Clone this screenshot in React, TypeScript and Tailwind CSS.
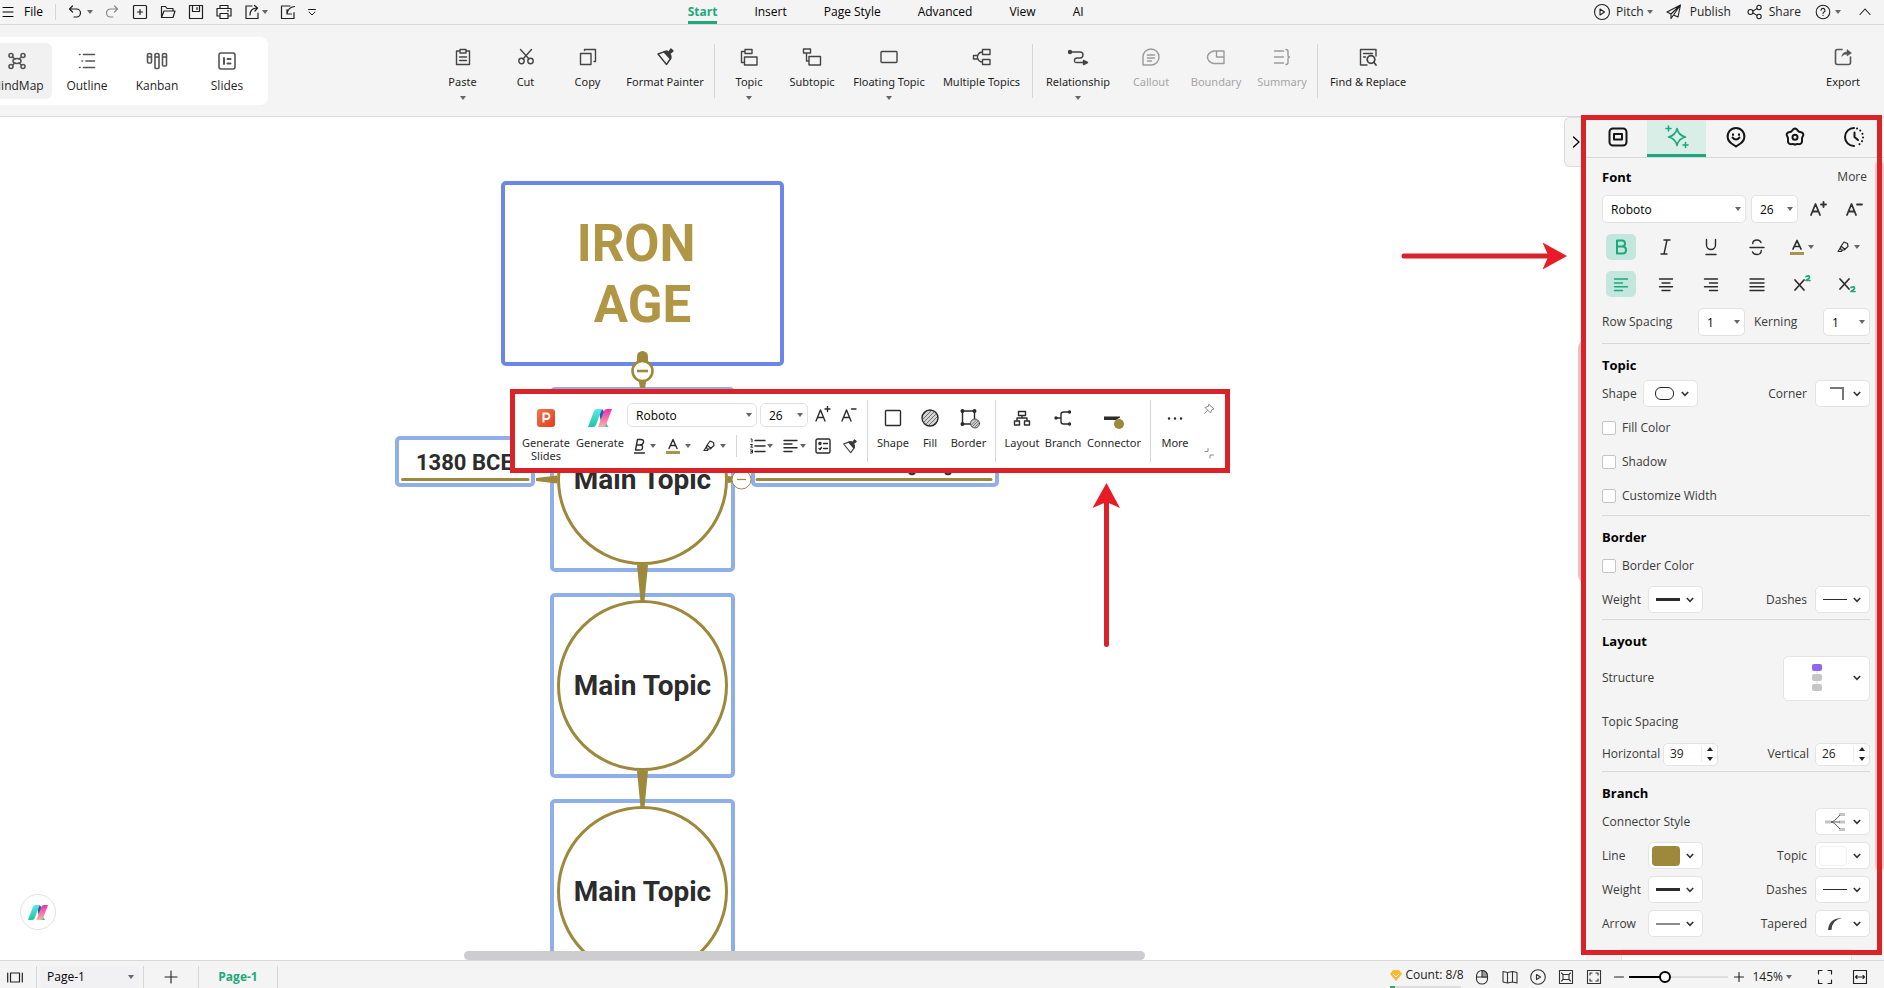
import React from "react";
import clsx from "clsx";

interface IconProps {
  size?: number;
  w?: number;
  className?: string;
  children: React.ReactNode;
}

// every icon is drawn on a grid that is as large as the icon itself
const Icon = ({ size = 18, w = 1.4, className, children }: IconProps) => (
  <svg
    width={size}
    height={size}
    viewBox={`0 0 ${size} ${size}`}
    fill="none"
    stroke="currentColor"
    strokeWidth={w}
    strokeLinecap="round"
    strokeLinejoin="round"
    className={clsx("shrink-0", className)}
    aria-hidden="true"
  >
    {children}
  </svg>
);

const Caret = ({ className }: { className?: string }) => (
  <svg width="6" height="4" viewBox="0 0 6 4" className={clsx("shrink-0 fill-[#666]", className)} aria-hidden="true">
    <path d="M0 0h6L3 4z" />
  </svg>
);

const Chevron = () => (
  <svg width="8" height="6" viewBox="0 0 8 6" fill="none" stroke="#333" strokeWidth="1.6" aria-hidden="true">
    <path d="M.8 1 4 4.4 7.2 1" />
  </svg>
);

const Logo = ({ size = 24 }: { size?: number }) => (
  <svg width={size} height={(size * 18) / 24} viewBox="0 0 24 18" aria-hidden="true">
    <defs>
      <linearGradient id="teal" x1="0" y1="0" x2="0" y2="1">
        <stop offset="0" stopColor="#5fe6e6" />
        <stop offset="1" stopColor="#1cc7a6" />
      </linearGradient>
      <linearGradient id="pink" x1="0" y1="0" x2="0" y2="1">
        <stop offset="0" stopColor="#ee2fb0" />
        <stop offset="1" stopColor="#fbb3a0" />
      </linearGradient>
    </defs>
    <path d="M11 3 14 0l3 4-4 9z" fill="#1c5fb0" />
    <path d="M17 12l3.5 6H15z" fill="#2fd0b0" />
    <path d="M6 2q1-2 3-2h5L8 16q-.8 2-3 2H0z" fill="url(#teal)" />
    <path d="M16 2q1-2 3-2h5l-6 16q-.8 2-3 2h-5z" fill="url(#pink)" />
  </svg>
);

const Brush = ({ small }: { small?: boolean }) => (
  <Icon className={clsx("text-[#3a3a3a]", small && "size-[15px]")}>
    <path d="M8 3.8 15 10l-4.5 6.5L2 6z" />
    <path d="M8 3.8 11 3l1.5 1.5L15 1l2 2-3.3 2.8L15 8l-.8 2.8z" fill="currentColor" />
  </Icon>
);

const Highlighter = () => (
  <Icon size={16} w={1.2}>
    <path d="M5.500 8 9 3l3.500 1.500.5 3L9 11H6zM6.500 7.500l3.500 3M5.500 8.500 3 12.500h3.500l1-1.500" />
  </Icon>
);

interface SelectProps {
  label: string;
  value: string;
  className?: string;
}
const Select = ({ label, value, className }: SelectProps) => (
  <span className={clsx("relative inline-flex items-center", className)}>
    <select
      aria-label={label}
      defaultValue={value}
      className="size-full appearance-none rounded-[5px] border border-[#e2e2e2] bg-white pt-px pl-2 text-[12px] leading-4 text-black"
    >
      <option>{value}</option>
    </select>
    <Caret className="pointer-events-none absolute right-[5px]" />
  </span>
);

interface PickerProps {
  label: string;
  big?: boolean;
  children: React.ReactNode;
}
const Picker = ({ label, big, children }: PickerProps) => (
  <button
    aria-label={label}
    className={clsx(
      "flex items-center justify-between rounded-[5px] border border-[#e4e4e4] bg-white pr-2",
      big ? "h-[45px] w-[87px] pl-1" : "h-[27px] w-[55px]"
    )}
  >
    <span className="flex flex-1 items-center justify-center">{children}</span>
    <Chevron />
  </button>
);

const Stepper = ({ id, value }: { id: string; value: number }) => (
  <span className="flex h-[23px] w-[55px] items-center rounded-[5px] border border-[#e4e4e4] bg-white">
    <input id={id} defaultValue={value} inputMode="numeric" className="h-4 w-[38px] border-r border-[#eee] pl-[6px] text-[12px] text-[#222]" />
    <span className="flex flex-1 flex-col items-center gap-[6px]">
      <button aria-label="Increase">
        <Caret className="block rotate-180 !fill-[#222]" />
      </button>
      <button aria-label="Decrease">
        <Caret className="block !fill-[#222]" />
      </button>
    </span>
  </span>
);

const Check = ({ label }: { label: string }) => (
  <label className="flex h-[34px] items-center gap-[6px] pt-[2px]">
    <input type="checkbox" className="size-[14px] appearance-none rounded-[2px] border border-[#c4c4c4] bg-white" />
    {label}
  </label>
);

const Heading = ({ children }: { children: React.ReactNode }) => (
  <h2 className="flex h-8 items-center pt-[10px] text-[13px] font-bold text-black">{children}</h2>
);

const Divider = ({ className }: { className?: string }) => (
  <span className={clsx("w-px shrink-0 bg-[#d6d6d6]", className)} />
);

const menuTabs = ["Start", "Insert", "Page Style", "Advanced", "View", "AI"];

const TopBar = () => (
  <header className="flex h-[25px] shrink-0 items-center border-b border-[#d9d9d9] text-[#1f1f1f]">
    <div className="flex w-[36.5%] shrink-0 items-center">
      <button className="flex items-center gap-[10px] pl-[2px] text-black">
        <Icon size={12} w={1.1}>
          <path d="M1 1.5h10M1 6h10M1 10.5h10" />
        </Icon>
        File
      </button>
      <Divider className="ml-3 h-4" />
      <button aria-label="Undo" className="ml-3 flex items-center gap-[5px]">
        <Icon size={14} w={1.2}>
          <path d="M4.500 1 1.500 4l3 3M1.500 4H8.500a4 4 0 0 1 0 8H6" />
        </Icon>
        <Caret />
      </button>
      <button aria-label="Redo" className="ml-3 text-[#888]">
        <Icon size={14} w={1.2}>
          <path d="M9.500 1l3 3-3 3M12.500 4H5.500a4 4 0 0 0 0 8H8" />
        </Icon>
      </button>
      <button aria-label="New" className="ml-[13px]">
        <Icon size={16} w={1.2}>
          <rect x="1.5" y="1.5" width="13" height="13" rx="1" />
          <path d="M8 5.500v5M5.500 8h5" />
        </Icon>
      </button>
      <button aria-label="Open" className="ml-3">
        <Icon size={16} w={1.2}>
          <path d="M1.500 13.500V2.500h4l1.500 2h6V7M1.500 13.500 4 7h11l-2 6.500z" />
        </Icon>
      </button>
      <button aria-label="Save" className="ml-3">
        <Icon size={16} w={1.2}>
          <path d="M1.500 1.500h13v13h-13zM4.500 1.500v6h7v-6M9 3.500v2" />
        </Icon>
      </button>
      <button aria-label="Print" className="ml-3">
        <Icon size={16} w={1.2}>
          <path d="M4 4.500v-3h8v3M4 12H1V4.500h14V12h-3M4 9.500h8v5H4zM11.500 6.800h1" />
        </Icon>
      </button>
      <button aria-label="Share file" className="ml-3 flex items-center gap-[2px]">
        <Icon size={16} w={1.2}>
          <path d="M8 2H2v12.500h12V9M6 11c0-4 2-7 7-7M10.500 1.500 13.500 4 11 7" />
        </Icon>
        <Caret />
      </button>
      <button aria-label="Import" className="ml-3">
        <Icon size={16} w={1.2}>
          <path d="M10 2H1.500v12.500H14V8.500M14.500 2.500c-4 .5-7 3-7.500 7.500M7 5.500V10h4.500" />
        </Icon>
      </button>
      <button aria-label="Customize" className="ml-3">
        <Icon size={8} w={1}>
          <path d="M.5 1.500h7M1 4l3 3 3-3" />
        </Icon>
      </button>
    </div>
    <nav className="flex h-full gap-[37px] text-black">
      {menuTabs.map((tab, i) => (
        <button
          key={tab}
          className={clsx(
            "flex h-full items-center border-b-[3px] pt-[2px]",
            i === 0 ? "border-[#1fa97c] font-bold text-[#1fa97c]" : "border-transparent"
          )}
        >
          {tab}
        </button>
      ))}
    </nav>
    <div className="flex flex-1 items-center justify-end pr-[12px]">
      <button className="flex items-center gap-[5px]">
        <Icon size={18} w={1.1}>
          <circle cx="9" cy="9" r="7.5" />
          <path d="M7 6v6l4.500-3z" />
        </Icon>
        <span className="flex items-center gap-[3px]">
          Pitch <Caret />
        </span>
      </button>
      <button className="ml-[13px] flex items-center gap-2">
        <Icon size={16} w={1.1}>
          <path d="M14.500 1 1 8l4 2 9.500-9L12 13l-4.500-2M5 10v4.500l2.500-3.500 7-10" />
        </Icon>
        Publish
      </button>
      <button className="ml-4 flex items-center gap-[6px]">
        <Icon size={16} w={1.1}>
          <circle cx="3.5" cy="8" r="2.5" />
          <circle cx="12" cy="3.5" r="2.2" />
          <circle cx="12" cy="12.5" r="2.2" />
          <path d="M6 7l4-2.400M6 9l4 2.400" />
        </Icon>
        Share
      </button>
      <button aria-label="Help" className="ml-[14px] flex items-center gap-[4px]">
        <Icon size={16} w={1.1}>
          <circle cx="8" cy="8" r="6.8" />
          <path d="M6 6.300a2 2 0 1 1 2.800 1.900Q8 8.600 8 9.500M8 11.300v.2" />
        </Icon>
        <Caret />
      </button>
      <button aria-label="Collapse ribbon" className="ml-[17px]">
        <Icon size={14} w={1.1}>
          <path d="M2 9.500 7 4l5 5.500" />
        </Icon>
      </button>
    </div>
  </header>
);

const views = [
  {
    name: "MindMap",
    icon: (
      <>
        <ellipse cx="9" cy="9" rx="4" ry="2.5" />
        <circle cx="3" cy="3.5" r="2" />
        <circle cx="15" cy="3.5" r="2" />
        <circle cx="3" cy="14.5" r="2" />
        <circle cx="15" cy="14.5" r="2" />
        <path d="M4.500 5 7 7M13.500 5 11 7M4.500 13 7 11M13.500 13 11 11" />
      </>
    ),
  },
  { name: "Outline", icon: <path d="M1.500 2.500h.5M5.500 2.500h11M4 9h.5M8 9h8.500M1.500 15.500h.5M5.500 15.500h11" /> },
  {
    name: "Kanban",
    icon: (
      <path d="M-.5 3q0-1.500 2-1.500t2 1.500v7q0 1-1 1H.5q-1 0-1-1zM-.5 5h4M7 3q0-1.500 2-1.500T11 3v12.500q0 1-1 1H8q-1 0-1-1zM7 5h4M14.500 3q0-1.500 2-1.500t2 1.500v10q0 1-1 1h-2q-1 0-1-1zM14.500 5h4" />
    ),
  },
  {
    name: "Slides",
    icon: (
      <>
        <rect x="1" y="1" width="16" height="16" rx="2" />
        <path d="M6 6v6M9.500 7h3M9.500 11.500h3" strokeWidth="2" />
      </>
    ),
  },
];

interface Tool {
  name: string;
  width: string;
  icon?: React.ReactNode;
  custom?: React.ReactNode;
  menu?: boolean;
  off?: boolean;
}
const toolGroups: Tool[][] = [
  [
    {
      name: "Paste",
      width: "w-[63px]",
      menu: true,
      icon: <path d="M6 3H2.500v13.500h13V3H12M6 1.500h6v3.500H6zM5.500 9h7M5.500 12.500h7" />,
    },
    {
      name: "Cut",
      width: "w-[63px]",
      icon: (
        <>
          <circle cx="4.5" cy="13" r="2.7" />
          <circle cx="13.5" cy="13" r="2.7" />
          <path d="M3.500 1.500 12 11M14.500 1.500 6 11" />
        </>
      ),
    },
    {
      name: "Copy",
      width: "w-[61px]",
      icon: <path d="M1.500 5.500h10.500v11H1.500zM5.500 2.500v-1h11v12h-1.500" />,
    },
    { name: "Format Painter", width: "w-[94px]", custom: <Brush /> },
  ],
  [
    {
      name: "Topic",
      width: "w-[60px]",
      menu: true,
      icon: <path d="M5 1.500h7v4H5zM5 3.500H1.500v11H4M4.500 9h12.500v8H4.500z" />,
    },
    {
      name: "Subtopic",
      width: "w-[66px]",
      icon: <path d="M.5 1h7v4h-7zM3.500 5v8H6M6 8.500h11.500V17H6z" />,
    },
    {
      name: "Floating Topic",
      width: "w-[88px]",
      menu: true,
      icon: <rect x="1" y="3.5" width="16" height="11" rx="1" />,
    },
    {
      name: "Multiple Topics",
      width: "w-[97px]",
      icon: (
        <path d="M9.500 1.500h7.500v5H9.500zM9.500 11.500h7.500v5H9.500zM.5 7.500h4v3.500h-4zM4.500 8c1-3 2-4 5-4M4.500 10c1 3 2 4 5 4" />
      ),
    },
  ],
  [
    {
      name: "Relationship",
      width: "w-[82px]",
      menu: true,
      icon: (
        <>
          <circle cx="1" cy="4" r="1.5" fill="currentColor" />
          <path d="M2 4h9q3 0 3 3t-3 3H8q-2.500 0-2.500 2.500T8 14.500h6" />
          <path d="M14.500 12.500l4 2-4 2z" fill="currentColor" />
        </>
      ),
    },
    {
      name: "Callout",
      width: "w-16",
      off: true,
      icon: <path d="M1 17V9a8 8 0 1 1 8 8zM5.500 7h7M5.500 10h7M5.500 13h4" />,
    },
    {
      name: "Boundary",
      width: "w-[66px]",
      off: true,
      icon: <path d="M6.500 3H17v12.500H6.500Q.5 13.500.5 9.200T6.500 3zM9.500 3v6H17" />,
    },
    {
      name: "Summary",
      width: "w-[66px]",
      off: true,
      icon: <path d="M1.500 3h9M1.500 9h9M1.500 15h9M13 1.500q2 0 2 2V7q0 2 1.500 2Q15 9 15 11v3.500q0 2-2 2" />,
    },
  ],
  [
    {
      name: "Find & Replace",
      width: "w-[92px]",
      icon: (
        <>
          <path d="M8 17H1.500V1.500H17V8M4.500 5.500h9M4.500 9h2" />
          <circle cx="12" cy="11.5" r="3.8" strokeWidth="1.8" />
          <path d="M14.800 14.300 17 17" strokeWidth="1.8" />
        </>
      ),
    },
  ],
];

const Ribbon = () => (
  <div className="flex h-[92px] shrink-0 overflow-hidden border-b border-[#d9d9d9] text-[#1f1f1f]">
    <div className="-ml-6 mt-3 flex h-[68px] shrink-0 rounded-lg bg-white p-[6px]">
      {views.map((view, i) => (
        <button
          key={view.name}
          className={clsx("flex w-[70px] flex-col items-center gap-2 rounded-md pt-[9px]", i === 0 && "bg-[#f1f1f1]")}
        >
          <Icon w={1.6} className="overflow-visible text-[#555]">
            {view.icon}
          </Icon>
          <span className="leading-4">{view.name}</span>
        </button>
      ))}
    </div>
    <div className="ml-[163px] flex font-['Noto_Sans',sans-serif] text-[11px]">
      {toolGroups.map((group, i) => (
        <div key={i} className="flex">
          {i > 0 && <Divider className="mt-[19px] mr-1 ml-[2px] h-[54px]" />}
          {group.map((tool) => (
            <button
              key={tool.name}
              disabled={tool.off}
              className={clsx("flex flex-col items-center pt-[23px]", tool.width, tool.off && "text-[#a5a5a5]")}
            >
              {tool.custom ?? (
                <Icon className={clsx("overflow-visible", tool.off ? "text-[#9a9a9a]" : "text-[#444]")}>
                  {tool.icon}
                </Icon>
              )}
              <span className="mt-2 leading-4 whitespace-nowrap">{tool.name}</span>
              {tool.menu && <Caret className="mt-[6px]" />}
            </button>
          ))}
        </div>
      ))}
    </div>
    <button className="mr-[9px] ml-auto flex w-16 flex-col items-center pt-[23px] font-['Noto_Sans',sans-serif] text-[11px]">
      <Icon w={1.6} className="text-[#555]">
        <path d="M8 1.500H3.500q-2 0-2 2v11q0 2 2 2h11q2 0 2-2V9" />
        <path d="M8 8q.5-4 5-4V1.500L17.500 5 13 8V6Q10 6 8 8z" fill="currentColor" strokeWidth="0.5" />
      </Icon>
      <span className="mt-2 leading-4">Export</span>
    </button>
  </div>
);

const topics = [
  { top: "top-[270px]", key: "a" },
  { top: "top-[476px]", key: "b" },
  { top: "top-[682px]", key: "c" },
];

const Diagram = () => (
  <>
    <div className="absolute top-[64px] left-[501px] flex h-[185px] w-[283px] items-center justify-center rounded-[5px] border-4 border-[#6b86ea]">
      <p className="text-center font-['Roboto',sans-serif] text-[51px] leading-[61px] font-bold whitespace-pre text-[#b09645]">
        {"IRON \nAGE"}
      </p>
    </div>
    {topics.map((topic) => (
      <div
        key={topic.key}
        className={clsx("absolute left-[550px] flex size-[185px] items-center justify-center rounded-[5px] border-4 border-[#8fafea]", topic.top)}
      >
        <div className="flex size-[171px] shrink-0 items-center justify-center rounded-full border-[3px] border-[#9d883c]">
          <span className="font-['Roboto',sans-serif] text-[28px] font-bold whitespace-nowrap text-[#2c2c2c]">Main Topic</span>
        </div>
      </div>
    ))}
    <div className="absolute top-[319px] left-[395px] h-[51px] w-[140px] rounded-[5px] border-4 border-[#8fafea] pt-[10px] pl-[17px] font-['Roboto',sans-serif] text-[22px] leading-[26px] font-bold whitespace-nowrap text-[#2c2c2c]">
      1380 BCE
    </div>
    <div className="absolute top-[319px] left-[751px] h-[51px] w-[248px] rounded-[5px] border-4 border-[#8fafea]" />
    <svg className="absolute top-0 left-0" width="1100" height="843" viewBox="0 117 1100 843" fill="none" aria-hidden="true">
      <path d="M402.500 479.500H528M757 479.500h234" stroke="#9d883c" strokeWidth="3" strokeLinecap="round" />
      <path d="M536 478l21-2.500v8L536 481z M728 476l8 1v5l-8 1z" fill="#9d883c" />
      <path d="M637 371V356.500a5.500 5.500 0 0 1 11 0V371l-3 17h-5z" fill="#9d883c" />
      <path d="M637 565h11l-3.500 36h-4zM637 771h11l-3.500 36h-4z" fill="#9d883c" />
      <circle cx="642.5" cy="371" r="10" fill="#fff" stroke="#9d883c" strokeWidth="2.6" />
      <path d="M637 371h11" stroke="#9d883c" strokeWidth="2.6" />
      <circle cx="741.5" cy="479.5" r="9.5" fill="#fff" stroke="#9d883c" strokeWidth="1" />
      <path d="M737 479.500h9" stroke="#9d883c" strokeWidth="1.2" />
      <path d="M909 473q3 2.500 6 0M945 473q3 2.500 6 0" stroke="#2c2c2c" strokeWidth="2" />
    </svg>
  </>
);

const Arrows = () => (
  <svg className="absolute top-0 left-0" width="1580" height="600" viewBox="0 117 1580 600" fill="none" aria-hidden="true">
    <path d="M1404 256h145M1106.500 500v144.500" stroke="#d9222a" strokeWidth="5" strokeLinecap="round" />
    <path d="M1567 256l-24.500 13.500 6-13.500-6-13.500zM1106.500 483l13.500 25-13.500-6-14 6z" fill="#e81c24" />
  </svg>
);

const FloatTool = ({ name, width, children }: { name: string; width: string; children: React.ReactNode }) => (
  <button className={clsx("flex flex-col items-center pt-[15px]", width)}>
    {children}
    <span className="mt-2 leading-4">{name}</span>
  </button>
);

const FloatingBar = () => (
  <div className="absolute top-[272px] left-[510px] flex h-[84px] w-[720px] border-[5px] border-[#dc2229] bg-white font-['Noto_Sans',sans-serif] text-[11px] text-[#2b2b2b]">
    <button className="flex w-[60px] flex-col items-center pt-[15px] pl-[2px]">
      <svg width="18" height="18" viewBox="0 0 18 18" aria-hidden="true">
        <linearGradient id="slides" x1="0" y1="0" x2="1" y2="1">
          <stop offset="0" stopColor="#f0764c" />
          <stop offset="1" stopColor="#e23c1c" />
        </linearGradient>
        <rect width="18" height="18" rx="3" fill="url(#slides)" />
        <path d="M6.500 13.500v-9h3.200a2.700 2.700 0 0 1 0 5.400H6.500" fill="none" stroke="#fff" strokeWidth="2" />
      </svg>
      <span className="mt-[9px] leading-[13px]">
        Generate
        <br />
        Slides
      </span>
    </button>
    <button className="flex w-[50px] flex-col items-center pt-[15px]">
      <Logo />
      <span className="mt-[9px] leading-[13px]">Generate</span>
    </button>
    <div className="flex w-[242px] flex-col pt-[9px] pl-[2px]">
      <div className="flex items-center font-['Open_Sans',sans-serif]">
        <Select label="Font family" value="Roboto" className="h-6 w-[130px]" />
        <Select label="Font size" value="26" className="ml-[3px] h-6 w-[48px]" />
        <button aria-label="Larger" className="ml-[7px]">
          <Icon>
            <path d="M1 15 5.500 4 10 15M2.500 11.500h6M10 3h5M12.500.5v5" />
          </Icon>
        </button>
        <button aria-label="Smaller" className="ml-2">
          <Icon>
            <path d="M1 15 5.500 4 10 15M2.500 11.500h6M10.500 3h4.500" />
          </Icon>
        </button>
      </div>
      <div className="mt-2 flex h-[22px] items-center">
        <button aria-label="Bold" className="ml-[5px] flex items-center gap-[2px]">
          <Icon size={16}>
            <path d="M5.500 1.500H9q3 0 2.500 2.700T8 7H4.500M8 7q3 0 2.500 2.800T7 12H3.500L5.500 1.500M2.500 15h10" />
          </Icon>
          <Caret />
        </button>
        <button aria-label="Text color" className="ml-[9px] flex items-center gap-[4px]">
          <Icon size={16}>
            <path d="M4 10.500 8 1.500l4 9M5.500 7.500h5" />
            <path d="M1 14.500h14" stroke="#a8944e" strokeWidth="3" strokeLinecap="butt" />
          </Icon>
          <Caret />
        </button>
        <button aria-label="Highlight" className="ml-[10px] flex items-center gap-[3px]">
          <Highlighter />
          <Caret />
        </button>
        <Divider className="ml-[10px] h-[22px]" />
        <button aria-label="Numbered list" className="ml-[13px] flex items-center gap-[1px]">
          <Icon size={16}>
            <path d="M5 2.500h10M5 8h10M5 13.500h10" />
            <path d="M1 1h1v3M.5 6.500h2L.8 9.200h2M.5 12h2v3h-2M1 13.500h1" strokeWidth="1" />
          </Icon>
          <Caret />
        </button>
        <button aria-label="Align" className="ml-[10px] flex items-center gap-[1px]">
          <Icon size={16}>
            <path d="M1 2.500h13M1 6h8M1 9.800h13M1 13.500h8" />
          </Icon>
          <Caret />
        </button>
        <button aria-label="Checklist" className="ml-[9px]">
          <Icon size={16}>
            <rect x="1" y="1" width="14" height="14" rx="1.5" />
            <circle cx="5" cy="5.5" r="1" />
            <path d="M8.500 5.500h4M4 10.500l1 1 1.500-2M8.500 10.500h4" />
          </Icon>
        </button>
        <button aria-label="Format painter" className="ml-[11px]">
          <Brush small />
        </button>
      </div>
    </div>
    <Divider className="mt-[6px] h-[62px]" />
    <FloatTool name="Shape" width="w-[50px]">
      <Icon>
        <rect x="1.5" y="1.5" width="15" height="15" rx="1" />
      </Icon>
    </FloatTool>
    <FloatTool name="Fill" width="w-[24px]">
      <Icon>
        <clipPath id="fillDisc">
          <circle cx="9" cy="9" r="8" />
        </clipPath>
        <circle cx="9" cy="9" r="8" fill="#d4d4d4" />
        <path d="M-1 9 9-1M0 12 12 0M1 15 15 1M3 17 17 3M6 18 18 6M9 19 19 9" strokeWidth="0.6" clipPath="url(#fillDisc)" />
      </Icon>
    </FloatTool>
    <FloatTool name="Border" width="w-[53px]">
      <Icon className="overflow-visible">
        <path d="M2.500 2h12v13h-12z" />
        <circle cx="2.5" cy="2" r="1.3" fill="currentColor" />
        <circle cx="14.5" cy="2" r="1.3" fill="currentColor" />
        <circle cx="2.5" cy="15" r="1.3" fill="currentColor" />
        <circle cx="15" cy="14.5" r="4.5" fill="#cfcfcf" strokeWidth="0.8" />
        <path d="M12 15.500l4-4M12.500 17.500l5.500-5.500M15 18l3.500-3.500" strokeWidth="0.5" />
      </Icon>
    </FloatTool>
    <Divider className="mt-[6px] h-[62px]" />
    <FloatTool name="Layout" width="w-[52px]">
      <Icon>
        <path d="M5.500 2.500h7v4h-7zM1.500 12h5v4h-5zM11.500 12h5v4h-5zM9 6.500V9M4 12V9h10v3" />
      </Icon>
    </FloatTool>
    <FloatTool name="Branch" width="w-[30px]">
      <Icon>
        <circle cx="2" cy="9" r="1" fill="currentColor" />
        <circle cx="15.5" cy="3" r="1" fill="currentColor" />
        <circle cx="15.5" cy="15" r="1" fill="currentColor" />
        <path d="M2 9h5M15 3H9.500Q7 3 7 5.500v7Q7 15 9.500 15H15" />
      </Icon>
    </FloatTool>
    <FloatTool name="Connector" width="w-[72px]">
      <Icon className="overflow-visible">
        <path d="M-1 7.500h16v1l-4 2.500H-1z" fill="currentColor" stroke="none" />
        <circle cx="14" cy="15" r="5" fill="#9d883c" stroke="none" />
      </Icon>
    </FloatTool>
    <Divider className="mt-[6px] h-[62px]" />
    <FloatTool name="More" width="w-[48px]">
      <Icon>
        <path d="M3 9.500h.1M9 9.500h.1M15 9.500h.1" strokeWidth="2.4" />
      </Icon>
    </FloatTool>
    <div className="flex flex-1 flex-col items-center justify-between py-[9px] pr-[6px] text-[#8a8a8a]">
      <button aria-label="Pin">
        <Icon size={12} w={1}>
          <path d="M6 1.500 11 6l-2 .5L7.500 10 2 4.500 5 3.500zM4.500 7.500 1.500 10.500" />
        </Icon>
      </button>
      <button aria-label="Shrink">
        <Icon size={12} w={1}>
          <path d="M2 4.500h3V1.500M7 11V8h3.500" />
        </Icon>
      </button>
    </div>
  </div>
);

const Canvas = () => (
  <main className="relative min-w-0 flex-1 overflow-hidden bg-white">
    <Diagram />
    <FloatingBar />
    <Arrows />
    <button aria-label="AI assistant" className="absolute bottom-[30px] left-5 flex size-9 items-center justify-center rounded-full border border-[#e2e2e6] bg-white">
      <Logo size={20} />
    </button>
    <div className="absolute bottom-0 left-[464px] h-[9px] w-[681px] rounded-full bg-[#cdcdcf]" />
    <button aria-label="Hide panel" className="absolute top-0 right-0 flex h-[50px] w-[22px] items-center justify-center rounded-l-md border border-r-0 border-[#dcdcdc] bg-[#f4f4f4]">
      <Icon size={14} w={1.3}>
        <path d="M4.500 2 10 7l-5.500 5" />
      </Icon>
    </button>
    <div className="absolute top-[223px] right-0 h-[243px] w-2 rounded-l-full bg-[#e3c3c6]" />
  </main>
);

const panelTabs = [
  {
    name: "Page",
    icon: (
      <>
        <rect x="1.5" y="1.5" width="17" height="17" rx="3.5" />
        <rect x="6" y="7" width="8" height="5.5" />
      </>
    ),
  },
  {
    name: "Style",
    icon: (
      <path d="M10 1.500Q11.500 8.500 18.500 10 11.500 11.500 10 18.500 8.500 11.500 1.500 10 8.500 8.500 10 1.500zM1.500-1v5M-1 1.500h5M18.500 15.500v5M16 18h5" />
    ),
  },
  {
    name: "Sticker",
    icon: <path d="M10 19.500 5.500 16.500A8.400 8.400 0 1 1 14.500 16.500zM7 7.300v.6M13 7.300v.6M6.500 10.500q3.500 4 7 0" />,
  },
  {
    name: "Clipart",
    icon: (
      <>
        <path d="M7.200 3.500Q10-.5 12.800 3.500 13.500 4.800 15.200 5.100 20 6 17.600 9.600 16.700 11 17 12.600 17.700 17.600 13.200 17.100 11.500 16.800 10 17.700 8.500 16.800 6.800 17.100 2.300 17.600 3 12.600 3.300 11 2.400 9.600 0 6 4.800 5.100 6.500 4.800 7.200 3.500z" />
        <circle cx="10" cy="10.3" r="2.5" />
      </>
    ),
  },
  {
    name: "History",
    icon: (
      <>
        <path d="M10 1A9 9 0 0 0 10 19M10.500 5.500V10l3.500 3" />
        <path d="M13 1.500A9 9 0 0 1 13 18.500" strokeDasharray="0.1 3.7" />
      </>
    ),
  },
];

const formatButtons = [
  { name: "Italic", icon: <path d="M7 2h6M4 16h6M10 2 7 16" /> },
  { name: "Underline", icon: <path d="M4.500 1.500V7a4.500 4.500 0 0 0 9 0V1.500M4 16.500h10" /> },
  { name: "Strikethrough", icon: <path d="M13 4.500Q12 2 9 2 5 2 4.700 5.500M2 9.500h14M13.300 12.500Q13 16.500 9 16.500 5.500 16.500 4.500 14" /> },
];

const alignButtons = [
  { name: "Center", icon: <path d="M2.500 4h13M5 8h8M2.500 11.800h13M5 15.500h8" /> },
  { name: "Right", icon: <path d="M2.500 4h13M7.500 8h8M2.500 11.800h13M7.500 15.500h8" /> },
  { name: "Justify", icon: <path d="M2 4h14M2 8h14M2 11.800h14M2 15.500h14" /> },
];

const Row = ({ children }: { children: React.ReactNode }) => (
  <div className="flex h-[34px] items-center pt-px">{children}</div>
);

const lineThick = <span className="h-[3px] w-6 bg-[#2b2b2b]" />;
const lineThin = <span className="h-px w-6 bg-[#2b2b2b]" />;

const Panel = () => (
  <aside className="relative w-[298px] shrink-0 bg-[#f4f4f4] text-[#3a3a3a]">
    <div className="flex h-[41px] border-b border-[#d9d9d9] pr-px pl-[2px]">
      {panelTabs.map((tab, i) => (
        <button
          key={tab.name}
          aria-label={tab.name}
          className={clsx(
            "flex flex-1 items-center justify-center border-b-[3px] pt-[2px]",
            i === 1 ? "border-[#1ba97b] bg-[#daeee8] text-[#1ba97b]" : "border-transparent text-[#161616]"
          )}
        >
          <Icon size={20} w={i === 1 ? 1.6 : 2} className="overflow-visible">
            {tab.icon}
          </Icon>
        </button>
      ))}
    </div>
    <div className="flex flex-col divide-y divide-[#d8d8d8] pr-[14px] pl-4">
      <section className="pb-[7px]">
        <div className="flex h-[37px] items-center justify-between">
          <h2 className="text-[13px] font-bold text-black">Font</h2>
          <button className="pr-[3px]">More</button>
        </div>
        <div className="flex h-7 items-center">
          <Select label="Font" value="Roboto" className="h-7 w-36" />
          <Select label="Size" value="26" className="ml-[5px] h-7 w-[47px]" />
          <button aria-label="Increase size" className="ml-3 text-[#333]">
            <Icon w={1.8}>
              <path d="M1 15 5.500 4 10 15M2.500 11.500h6M11 4.500h5M13.500 2v5" />
            </Icon>
          </button>
          <button aria-label="Decrease size" className="ml-[18px] text-[#333]">
            <Icon w={1.8}>
              <path d="M1 15 5.500 4 10 15M2.500 11.500h6M11 4.500h5" />
            </Icon>
          </button>
        </div>
        <div className="mt-[11px] -ml-1 grid grid-cols-6 justify-items-center gap-y-[11px] text-[#2b2b2b]">
          <button aria-label="Bold" className="flex h-[26px] w-[30px] items-center justify-center rounded-[5px] bg-[#c3e7dc] text-[#1ba97b]">
            <Icon size={16} w={2}>
              <path d="M4 1.500h5q3 0 3 3t-3 3H4zM4 7.500h5.500q3.500 0 3.500 3.500t-3.500 3.500H4z" />
            </Icon>
          </button>
          {formatButtons.map((b) => (
            <button key={b.name} aria-label={b.name}>
              <Icon>{b.icon}</Icon>
            </button>
          ))}
          <button aria-label="Font color" className="flex items-center gap-[3px]">
            <Icon size={16} w={1.7}>
              <path d="M4 10 8 1.500l4 8.500M5.500 7.500h5" />
              <path d="M1 14.500h14" stroke="#a8944e" strokeWidth="3" strokeLinecap="butt" />
            </Icon>
            <Caret />
          </button>
          <button aria-label="Highlight color" className="flex items-center gap-[3px]">
            <Highlighter />
            <Caret />
          </button>
          <button aria-label="Left" className="flex h-[26px] w-[30px] items-center justify-center rounded-[5px] bg-[#c3e7dc] text-[#1ba97b]">
            <Icon>
              <path d="M2.500 4h13M2.500 8h8M2.500 11.800h13M2.500 15.500h8" />
            </Icon>
          </button>
          {alignButtons.map((b) => (
            <button key={b.name} aria-label={b.name}>
              <Icon>{b.icon}</Icon>
            </button>
          ))}
          <button aria-label="Superscript">
            <Icon className="overflow-visible">
              <path d="M2 5l9 10M11 5 2 15" strokeWidth="1.7" />
              <path d="M13 1.500q3.500-1.500 3.500.8 0 1-3.500 3.200h4" stroke="#1ba97b" strokeWidth="1.7" />
            </Icon>
          </button>
          <button aria-label="Subscript">
            <Icon className="overflow-visible">
              <path d="M2 4l9 10M11 4 2 14" strokeWidth="1.7" />
              <path d="M13 12.500q3.500-1.500 3.500.8 0 1-3.500 3.200h4" stroke="#1ba97b" strokeWidth="1.7" />
            </Icon>
          </button>
        </div>
        <div className="mt-[11px] flex items-center">
          <span>Row Spacing</span>
          <Select label="Row Spacing" value="1" className="ml-auto h-7 w-[47px]" />
          <span className="ml-[9px] w-[69px]">Kerning</span>
          <Select label="Kerning" value="1" className="h-7 w-[47px]" />
        </div>
      </section>
      <section className="pb-[3px]">
        <Heading>Topic</Heading>
        <Row>
          <span className="mr-[6px]">Shape</span>
          <Picker label="Shape">
            <span className="ml-1 h-[13px] w-[19px] rounded-[6px] border border-[#222]" />
          </Picker>
          <span className="mr-2 ml-auto">Corner</span>
          <Picker label="Corner">
            <span className="ml-1 h-[13px] w-[14px] border-t-2 border-r-2 border-[#777]" />
          </Picker>
        </Row>
        <Check label="Fill Color" />
        <Check label="Shadow" />
        <Check label="Customize Width" />
      </section>
      <section className="pb-[3px]">
        <Heading>Border</Heading>
        <Check label="Border Color" />
        <Row>
          <span className="w-[46px]">Weight</span>
          <Picker label="Border weight">{lineThick}</Picker>
          <span className="mr-2 ml-auto">Dashes</span>
          <Picker label="Border dashes">{lineThin}</Picker>
        </Row>
      </section>
      <section className="pb-[3px]">
        <Heading>Layout</Heading>
        <div className="flex h-[52px] items-center justify-between">
          <span>Structure</span>
          <Picker label="Structure" big>
            <svg width="10" height="28" viewBox="0 0 10 28" className="mr-2" aria-hidden="true">
              <path d="M4.500 6h1v16h-1z" fill="#ddd" />
              <rect width="10" height="7" rx="2" fill="#8f66f0" />
              <rect y="10" width="10" height="7" rx="2" fill="#c6c6c6" />
              <rect y="20" width="10" height="7" rx="2" fill="#c6c6c6" />
            </svg>
          </Picker>
        </div>
        <div className="flex h-9 items-center">Topic Spacing</div>
        <div className="flex h-7 items-center">
          <label htmlFor="horizontal" className="w-[61px]">
            Horizontal
          </label>
          <Stepper id="horizontal" value={39} />
          <label htmlFor="vertical" className="mr-[6px] ml-auto">
            Vertical
          </label>
          <Stepper id="vertical" value={26} />
        </div>
      </section>
      <section>
        <Heading>Branch</Heading>
        <Row>
          <span className="mr-auto">Connector Style</span>
          <Picker label="Connector Style">
            <svg width="20" height="18" viewBox="0 0 20 18" fill="none" aria-hidden="true">
              <path d="M0 7.500h6v3H0zM14 0h6v3h-6zM14 7.500h6v3h-6zM14 15h6v3h-6z" fill="#c4c4c4" />
              <path d="M6 9h9M6 9q3 0 9-7M6 9q3 0 9 7" stroke="#555" />
            </svg>
          </Picker>
        </Row>
        <Row>
          <span className="w-[46px]">Line</span>
          <Picker label="Line color">
            <span className="mr-1 h-5 w-7 rounded bg-[#9d883c]" />
          </Picker>
          <span className="mr-2 ml-auto">Topic</span>
          <Picker label="Topic color">
            <span className="mr-1 h-5 w-7 rounded border border-[#f2f2f2] bg-white" />
          </Picker>
        </Row>
        <Row>
          <span className="w-[46px]">Weight</span>
          <Picker label="Branch weight">{lineThick}</Picker>
          <span className="mr-2 ml-auto">Dashes</span>
          <Picker label="Branch dashes">{lineThin}</Picker>
        </Row>
        <Row>
          <span className="w-[46px]">Arrow</span>
          <Picker label="Arrow">
            <span className="h-[2px] w-6 bg-[#8c8c8c]" />
          </Picker>
          <span className="mr-2 ml-auto">Tapered</span>
          <Picker label="Tapered">
            <svg width="16" height="14" viewBox="0 0 16 14" aria-hidden="true">
              <path d="M1 13Q2 1 15 1 5 3 4.500 13z" fill="#444" />
            </svg>
          </Picker>
        </Row>
      </section>
    </div>
    <div className="absolute bottom-0 left-[35px] h-[11px] w-[231px] border border-b-0 border-[#e6e6e6] bg-white" />
    <div className="absolute top-11 right-0 h-[710px] w-[9px] rounded-full bg-[#f0c8cb]" />
    <div className="pointer-events-none absolute -top-[2px] right-[2px] bottom-[5px] -left-[5px] border-[5px] border-[#dc2229]" />
  </aside>
);

const StatusBar = () => (
  <footer className="flex h-[28px] shrink-0 items-center border-t border-[#d9d9d9] pt-[4px] text-[#222]">
    <button aria-label="Page panel" className="ml-[7px]">
      <Icon size={16} w={1.2}>
        <path d="M.7 4v9M15.300 4v9M3.500 4h9v9h-9z" />
      </Icon>
    </button>
    <Divider className="ml-[13px] h-[22px]" />
    <span className="relative ml-[3px] flex w-[99px] items-center">
      <select aria-label="Page" defaultValue="Page-1" className="h-[22px] w-full appearance-none rounded bg-[#f1f1f3] pl-[7px] text-black">
        <option>Page-1</option>
      </select>
      <Caret className="pointer-events-none absolute right-[5px]" />
    </span>
    <Divider className="ml-[4px] h-[22px]" />
    <button aria-label="Add page" className="mx-5">
      <Icon size={14} w={1.1}>
        <path d="M7 1v12M1 7h12" />
      </Icon>
    </button>
    <Divider className="h-[22px]" />
    <button className="w-[78px] text-center font-bold text-[#1ba97b]">Page-1</button>
    <Divider className="h-[22px]" />
    <div className="mr-[13px] ml-auto flex w-[71px] flex-col justify-end self-end">
      <span className="flex items-center gap-[3px] pb-[2px] leading-[18px] whitespace-nowrap">
        <svg width="12" height="11" viewBox="0 0 12 11" className="shrink-0" aria-hidden="true">
          <path d="M3 0h6l3 4-6 7-6-7z" fill="#fdb833" />
          <path d="M3 4l3 3 3-3" fill="none" stroke="#fff" />
        </svg>
        Count: 8/8
      </span>
      <span className="flex h-[2px] bg-[#dedede]">
        <span className="w-[5px] bg-[#2aa876]" />
      </span>
    </div>
    <div className="flex items-center gap-3 text-[#333]">
      <button aria-label="Mouse">
        <Icon size={16} w={1.1}>
          <path d="M2.500 7a5.500 5.500 0 0 1 11 0v3a5.500 5 0 0 1-11 0zM2.500 8h11" />
          <path d="M8 8V1.500a5.500 5.500 0 0 1 5.500 6.500z" fill="#999" />
        </Icon>
      </button>
      <button aria-label="Map">
        <Icon size={16} w={1.1}>
          <path d="M1 2.500 5.500 3.500 10.500 2.500 15 3.500v10.500l-4.500-1-5 1-4.500-1zM5.500 3.500V14M10.500 2.500V13" />
        </Icon>
      </button>
      <button aria-label="Present">
        <Icon size={16} w={1.1}>
          <circle cx="8" cy="8" r="7.3" />
          <path d="M6.500 5.500v5l4-2.500z" />
        </Icon>
      </button>
      <button aria-label="Fit page">
        <Icon size={16} w={1.1}>
          <path d="M1.500 1.500h13v13h-13zM5 5.500h6v5H5zM3.500 4l1.500 1.500M12.500 4 11 5.500M3.500 12 5 10.500M12.500 12 11 10.500" />
        </Icon>
      </button>
      <button aria-label="Fit all">
        <Icon size={16} w={1.1}>
          <path d="M1.500 1.500h13v13h-13zM4 6V4h2M10 4h2v2M4 10v2h2M12 10v2h-2" />
        </Icon>
      </button>
    </div>
    <button aria-label="Zoom out" className="ml-3">
      <Icon size={10} w={1.1}>
        <path d="M.5 5h9" />
      </Icon>
    </button>
    <input
      type="range"
      aria-label="Zoom"
      defaultValue={34}
      className="ml-[5px] h-[2px] w-[99px] appearance-none bg-[linear-gradient(to_right,#000_36%,#dedede_36%)] [&::-webkit-slider-thumb]:size-3 [&::-webkit-slider-thumb]:appearance-none [&::-webkit-slider-thumb]:rounded-full [&::-webkit-slider-thumb]:border-2 [&::-webkit-slider-thumb]:border-black [&::-webkit-slider-thumb]:bg-white"
    />
    <button aria-label="Zoom in" className="ml-[6px]">
      <Icon size={10} w={1.1}>
        <path d="M.5 5h9M5 .5v9" />
      </Icon>
    </button>
    <button className="ml-2 flex items-center gap-[3px]">
      145% <Caret />
    </button>
    <button aria-label="Full screen" className="ml-[25px]">
      <Icon size={16} w={1.2}>
        <path d="M1.500 5V1.500H5M11 1.500h3.500V5M1.500 11v3.500H5M14.500 11v3.500H11" />
      </Icon>
    </button>
    <button aria-label="Fit width" className="mr-4 ml-[19px]">
      <Icon size={16} w={1.1}>
        <path d="M1.500 1.500h13v13h-13zM3.500 8h9M5 6.500 3.500 8 5 9.500M11 6.500 12.500 8 11 9.500" />
      </Icon>
    </button>
  </footer>
);

const App = () => (
  <div className="flex h-screen flex-col overflow-hidden bg-[#f4f4f4] font-['Open_Sans','Noto_Sans',sans-serif] text-[12px] leading-4">
    <TopBar />
    <Ribbon />
    <div className="flex min-h-0 flex-1">
      <Canvas />
      <Panel />
    </div>
    <StatusBar />
  </div>
);

export default App;
